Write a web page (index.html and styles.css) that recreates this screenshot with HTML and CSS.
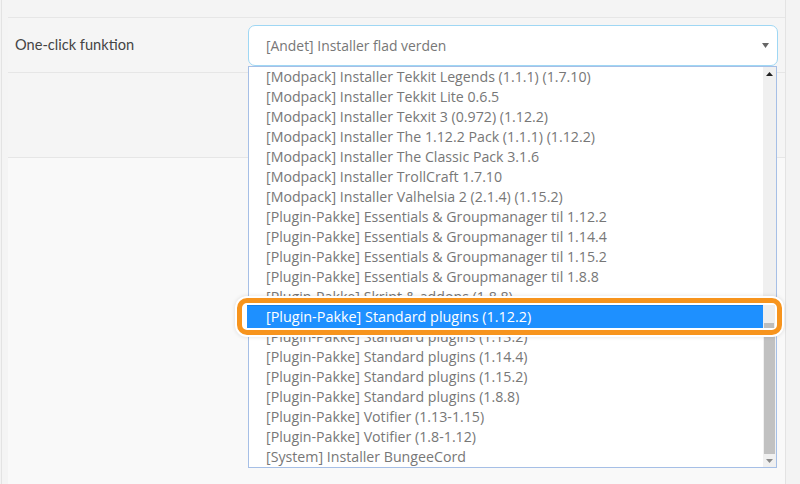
FILE: index.html
```html
<!DOCTYPE html>
<html lang="da">
<head>
<meta charset="utf-8">
<title>One-click funktion</title>
<link rel="stylesheet" href="styles.css">
</head>
<body>
<div class="panel">
  <div class="form">
    <div class="row row-select">
      <div class="label">One-click funktion</div>
      <div class="field">
        <div class="select">
          <span class="select-value">[Andet] Installer flad verden</span>
          <svg class="select-arrow" width="7" height="5" viewBox="0 0 7 5"><path d="M0 0H7L3.5 5Z" fill="#666"/></svg>
        </div>
        <div class="dropdown">
          <div class="options">
            <div class="opt">[Modpack] Installer Tekkit Legends (1.1.1) (1.7.10)</div>
            <div class="opt">[Modpack] Installer Tekkit Lite 0.6.5</div>
            <div class="opt">[Modpack] Installer Tekxit 3 (0.972) (1.12.2)</div>
            <div class="opt">[Modpack] Installer The 1.12.2 Pack (1.1.1) (1.12.2)</div>
            <div class="opt">[Modpack] Installer The Classic Pack 3.1.6</div>
            <div class="opt">[Modpack] Installer TrollCraft 1.7.10</div>
            <div class="opt">[Modpack] Installer Valhelsia 2 (2.1.4) (1.15.2)</div>
            <div class="opt">[Plugin-Pakke] Essentials &amp; Groupmanager til 1.12.2</div>
            <div class="opt">[Plugin-Pakke] Essentials &amp; Groupmanager til 1.14.4</div>
            <div class="opt">[Plugin-Pakke] Essentials &amp; Groupmanager til 1.15.2</div>
            <div class="opt">[Plugin-Pakke] Essentials &amp; Groupmanager til 1.8.8</div>
            <div class="opt">[Plugin-Pakke] Skript &amp; addons (1.8.8)</div>
            <div class="opt">[Plugin-Pakke] Standard plugins (1.12.2)</div>
            <div class="opt">[Plugin-Pakke] Standard plugins (1.13.2)</div>
            <div class="opt">[Plugin-Pakke] Standard plugins (1.14.4)</div>
            <div class="opt">[Plugin-Pakke] Standard plugins (1.15.2)</div>
            <div class="opt">[Plugin-Pakke] Standard plugins (1.8.8)</div>
            <div class="opt">[Plugin-Pakke] Votifier (1.13-1.15)</div>
            <div class="opt">[Plugin-Pakke] Votifier (1.8-1.12)</div>
            <div class="opt">[System] Installer BungeeCord</div>
          </div>
          <div class="scrollbar">
            <div class="sb-btn"><svg width="7" height="4" viewBox="0 0 7 4"><path d="M0 4H7L3.5 0Z" fill="#222"/></svg></div>
            <div class="sb-track">
              <div class="sb-space"></div>
              <div class="sb-thumb"></div>
            </div>
            <div class="sb-btn"><svg width="7" height="4" viewBox="0 0 7 4"><path d="M0 0H7L3.5 4Z" fill="#8a8a8a"/></svg></div>
          </div>
        </div>
      </div>
    </div>
    <div class="row row-empty"></div>
    <div class="below"></div>
  </div>
</div>

<div class="callout">
  <div class="callout-inner">
    <div class="callout-bar">[Plugin-Pakke] Standard plugins (1.12.2)</div>
    <div class="callout-scroll"><div class="callout-thumb"></div></div>
  </div>
</div>
</body>
</html>
```
FILE: styles.css
```css
html, body {
  margin: 0;
  padding: 0;
}
body {
  background: #f3f3f3;
  width: 800px;
  height: 484px;
  overflow: hidden;
  position: relative;
  font-family: "Open Sans", "Liberation Sans", sans-serif;
}
.panel {
  margin-left: 1px;
  width: 783px;
  height: 484px;
  border-left: 1px solid #e3e3e3;
  border-right: 1px solid #e3e3e3;
  background: #f4f4f4;
}
.form {
  padding-left: 6px;
  padding-top: 17px;
  height: 467px;
  display: flex;
  flex-direction: column;
}
.row {
  border-top: 1px solid #e6e6e6;
  background: #f5f5f5;
}
.row-select {
  height: 54px;
  display: flex;
  align-items: flex-start;
  padding: 0 7px;
}
.label {
  width: 233px;
  height: 54px;
  line-height: 54px;
  font-family: "Lato", "Liberation Sans", sans-serif;
  font-size: 14.6px;
  color: #444;
}
.field {
  position: relative;
  margin-top: 7px;
  width: 530px;
}
.select {
  box-sizing: border-box;
  height: 41px;
  border: 1px solid #9fd7f4;
  border-radius: 7px;
  background: #fff;
  display: flex;
  align-items: center;
  padding: 0 8px 0 17px;
}
.select-value {
  flex: 1;
  font-size: 13.9px;
  color: #777;
}
.select-arrow {
  display: block;
}
.dropdown {
  position: absolute;
  top: 41px;
  left: 0;
  width: 529px;
  height: 402px;
  box-sizing: border-box;
  border: 1px solid #a6bfe6;
  background: #fff;
  display: flex;
  z-index: 2;
}
.options {
  flex: 1;
  overflow: hidden;
}
.opt {
  height: 20px;
  line-height: 20px;
  padding-left: 17px;
  font-size: 14.2px;
  color: #777;
  white-space: nowrap;
}
.scrollbar {
  width: 13px;
  background: #f0f0f0;
  display: flex;
  flex-direction: column;
}
.sb-btn {
  height: 13px;
  display: flex;
  align-items: center;
  justify-content: center;
}
.sb-track {
  flex: 1;
  display: flex;
  flex-direction: column;
}
.sb-space {
  flex: 1;
}
.sb-thumb {
  height: 146px;
  margin: 0 1px;
  background: #c1c1c1;
}
.row-empty {
  height: 84px;
}
.below {
  flex: 1;
  border-top: 1px solid #e6e6e6;
  background: #f9f9f9;
}
.callout {
  position: absolute;
  left: 237px;
  top: 298px;
  width: 545px;
  height: 37px;
  box-sizing: border-box;
  border: 5px solid #f7941d;
  border-radius: 10px;
  box-shadow: 0 0 0 2px #fff, 0 0 4px 2px rgba(0, 0, 0, 0.12);
  background: #fff;
  z-index: 5;
}
.callout-inner {
  display: flex;
  height: 100%;
  padding: 2px 2px 2px 5px;
  box-sizing: border-box;
}
.callout-bar {
  flex: 1;
  background: #1e90ff;
  border-top: 1px solid #1a7fe6;
  color: #fff;
  font-size: 14.4px;
  line-height: 22px;
  padding-left: 19px;
  white-space: nowrap;
}
.callout-scroll {
  width: 12px;
  background: #eeeeee;
  display: flex;
  flex-direction: column;
  justify-content: flex-end;
}
.callout-thumb {
  height: 5px;
  margin: 0 1px;
  background: #bdbdbd;
}
```
